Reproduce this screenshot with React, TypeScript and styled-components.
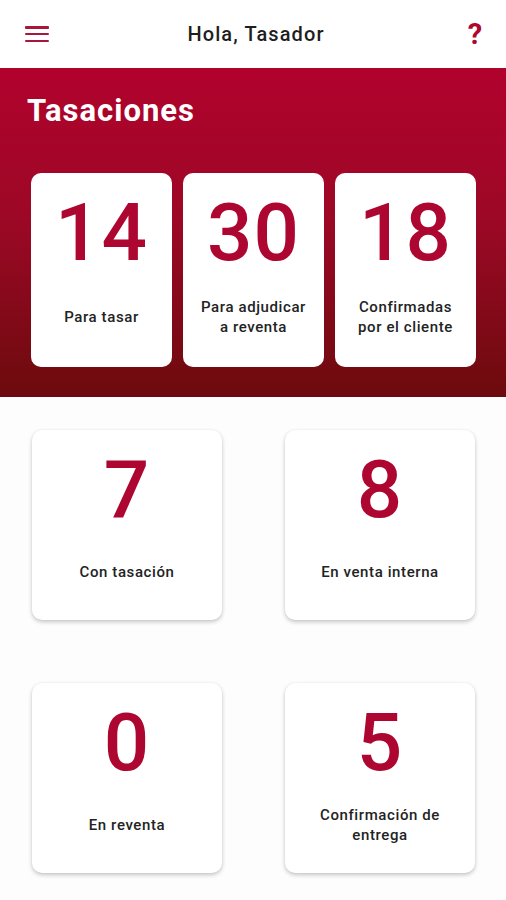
import styled, { createGlobalStyle } from 'styled-components';

const GlobalStyle = createGlobalStyle`
    body {
        margin: 0;
        background: #fdfdfd;
        font-family: Roboto, 'Liberation Sans', sans-serif;
    }
`;

const Page = styled.div`
    width: 506px;
    min-height: 900px;
    background: #fdfdfd;
`;

const Header = styled.header`
    height: 68px;
    display: flex;
    align-items: center;
    justify-content: space-between;
    padding: 0 19px 0 25px;
    background: #ffffff;
    box-sizing: border-box;
`;

const MenuButton = styled.button`
    width: 24px;
    height: 16px;
    padding: 0;
    border: none;
    background: none;
    display: flex;
    flex-direction: column;
    justify-content: space-between;
    span {
        display: block;
        height: 2.5px;
        border-radius: 1px;
        background: #a8163b;
    }
`;

const Greeting = styled.h1`
    margin: 0;
    font-size: 20px;
    font-weight: 500;
    color: #1e1e1e;
    letter-spacing: 1.1px;
`;

const HelpButton = styled.span`
    font-size: 29px;
    font-weight: 700;
    color: #b0062f;
    width: 24px;
    text-align: center;
`;

const Banner = styled.section`
    background: linear-gradient(180deg, #b1022d 0%, #9d0826 45%, #6c0b0d 100%);
    padding: 25px 30px 30px 31px;
`;

const BannerTitle = styled.h2`
    margin: 0 0 44px -4px;
    font-size: 31px;
    line-height: 36px;
    font-weight: 700;
    color: #ffffff;
    letter-spacing: 1px;
`;

const TopGrid = styled.div`
    display: grid;
    grid-template-columns: repeat(3, 141px);
    gap: 11px;
`;

const Card = styled.div<{ $size: number; $shadow?: boolean }>`
    height: ${(p) => p.$size}px;
    background: #ffffff;
    border-radius: 10px;
    display: flex;
    flex-direction: column;
    align-items: center;
    padding: 20px 8px 6px;
    box-sizing: border-box;
    box-shadow: ${(p) =>
        p.$shadow ? '0 2px 4px rgba(0, 0, 0, 0.22), 0 0 2px rgba(0, 0, 0, 0.06)' : 'none'};
`;

const Count = styled.div`
    font-size: 80px;
    line-height: 80px;
    font-weight: 500;
    color: #ad0631;
    letter-spacing: 1px;
`;

const Label = styled.div`
    flex: 1;
    display: flex;
    align-items: center;
    text-align: center;
    font-size: 15px;
    line-height: 20px;
    font-weight: 500;
    color: #232323;
    letter-spacing: 0.6px;
`;

const LowerGrid = styled.div`
    display: grid;
    grid-template-columns: repeat(2, 190px);
    column-gap: 63px;
    row-gap: 63px;
    padding: 33px 0 0 32px;
`;

const topItems = [
    { count: 14, label: 'Para tasar' },
    { count: 30, label: 'Para adjudicar\na reventa' },
    { count: 18, label: 'Confirmadas\npor el cliente' },
];

const lowerItems = [
    { count: 7, label: 'Con tasación' },
    { count: 8, label: 'En venta interna' },
    { count: 0, label: 'En reventa' },
    { count: 5, label: 'Confirmación de\nentrega' },
];

const StatLabel = ({ text }: { text: string }) => (
    <Label>
        <span>
            {text.split('\n').map((line, i) => (
                <div key={i}>{line}</div>
            ))}
        </span>
    </Label>
);

export default function App() {
    return (
        <Page>
            <GlobalStyle />
            <Header>
                <MenuButton aria-label="Menú">
                    <span />
                    <span />
                    <span />
                </MenuButton>
                <Greeting>Hola, Tasador</Greeting>
                <HelpButton>?</HelpButton>
            </Header>
            <Banner>
                <BannerTitle>Tasaciones</BannerTitle>
                <TopGrid>
                    {topItems.map((item) => (
                        <Card key={item.label} $size={194}>
                            <Count>{item.count}</Count>
                            <StatLabel text={item.label} />
                        </Card>
                    ))}
                </TopGrid>
            </Banner>
            <LowerGrid>
                {lowerItems.map((item) => (
                    <Card key={item.label} $size={190} $shadow>
                        <Count>{item.count}</Count>
                        <StatLabel text={item.label} />
                    </Card>
                ))}
            </LowerGrid>
        </Page>
    );
}
